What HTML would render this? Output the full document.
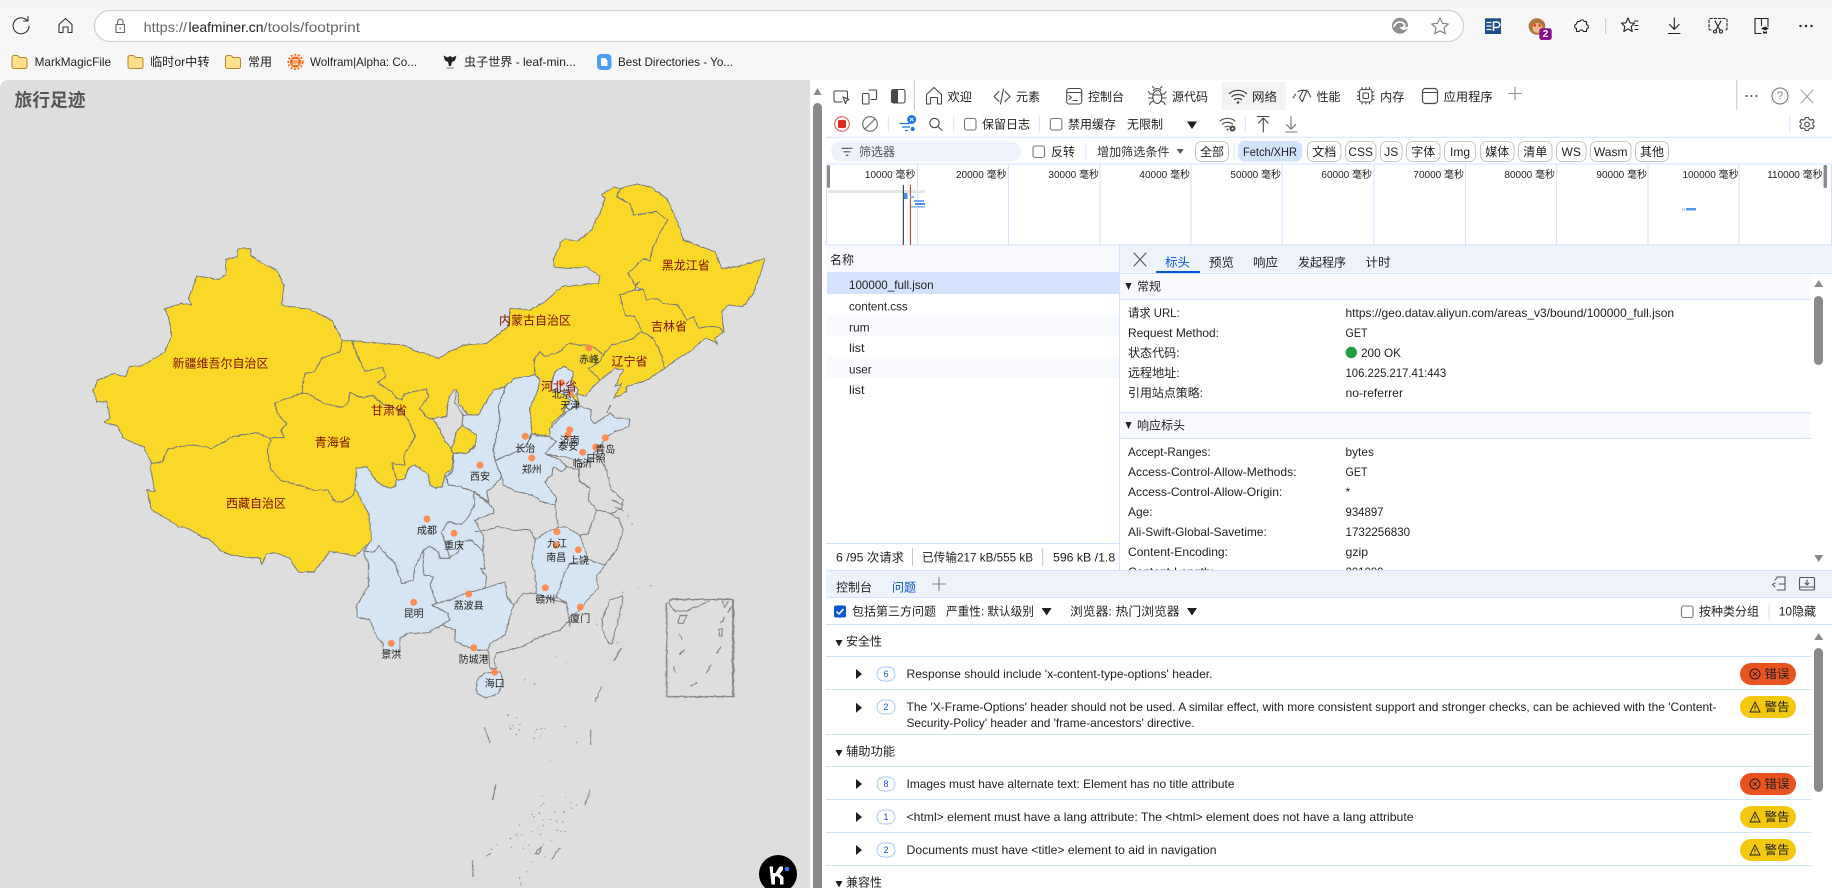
<!DOCTYPE html>
<html lang="zh-CN">
<head>
<meta charset="utf-8">
<title>旅行足迹</title>
<style>
html,body{margin:0;padding:0;width:1832px;height:888px;overflow:hidden;background:#fff}
svg{display:block;font-family:"Liberation Sans","Noto Sans CJK SC",sans-serif}
text{font-size:12px;fill:#1f1f1f;dominant-baseline:central}
.m polygon,.m path{stroke:#7c7c7c;stroke-width:1;vector-effect:non-scaling-stroke;stroke-linejoin:round}
.y{fill:#fad827}.b{fill:#d6e5f3}.g{fill:#dedede}.n{fill:none}
text.p{fill:#7d0f00;text-anchor:middle}
text.c{font-size:10px;fill:#222;text-anchor:middle}
text.tl{font-size:10px;text-anchor:end}
.d{fill:#ff8a4d;opacity:.95}
.i{fill:none;stroke:#474747;stroke-width:1.1;stroke-linecap:round;stroke-linejoin:round}
.l{stroke:#d3e3fd;stroke-width:1;fill:none}
.dv{stroke:#c7c7c7;stroke-width:1}
.btn{fill:#fff;stroke:#c4c7c5;stroke-width:1}
.f{fill:#1f1f1f}
.badge{fill:#fff;stroke:#a8c7fa;stroke-width:1}
text.bn{font-size:9px;fill:#0b57d0;text-anchor:middle}
</style>
</head>
<body>
<svg width="1832" height="888" viewBox="0 0 1832 888" xmlns="http://www.w3.org/2000/svg">
<defs>
<filter id="j" filterUnits="userSpaceOnUse" x="0" y="80" width="810" height="808" color-interpolation-filters="sRGB">
<feTurbulence type="fractalNoise" baseFrequency=".22" numOctaves="2" seed="4" result="n"/>
<feDisplacementMap in="SourceGraphic" in2="n" scale="2.4" xChannelSelector="R" yChannelSelector="G"/>
</filter>
<g id="fo"><path d="M.5 3.5a2 2 0 0 1 2-2h3.500l2 2h5.500a2 2 0 0 1 2 2v7a2 2 0 0 1-2 2h-11a2 2 0 0 1-2-2Z" fill="#ffe08a" stroke="#b3872a" stroke-width="1"/></g>
</defs>
<rect width="1832" height="888" fill="#fff"/>
<rect width="1832" height="80" fill="#f7f7f7"/>
<rect width="1832" height="8" fill="#f3f3f3"/>
<!-- browser bar -->
<path class="i" d="M27.500 21a8 8 0 1 0 1.600 5M28 16.500V21h-4.500" style="stroke:#333"/>
<path class="i" d="M59 32.500V24.500L65.500 18.500L72 24.500V32.500H68V27H63V32.500Z" style="stroke:#333"/>
<rect x="94.500" y="10.500" width="1369" height="31" rx="15.500" fill="#fff" stroke="#d2d2d2" stroke-width="1.300"/>
<path class="i" d="M116 24.500h8.500V32.500H116ZM117.500 24.500V22a2.800 2.800 0 0 1 5.600 0V24.500" style="stroke:#666"/><circle cx="120.200" cy="28.500" r=".8" fill="#666"/>
<text x="143.600" y="27" textLength="43.400" lengthAdjust="spacingAndGlyphs" style="font-size:14px;fill:#666">https://</text>
<text x="188.500" y="27" textLength="75" lengthAdjust="spacingAndGlyphs" style="font-size:14px;fill:#1f1f1f">leafminer.cn</text>
<text x="263.400" y="27" textLength="96.600" lengthAdjust="spacingAndGlyphs" style="font-size:14px;fill:#666">/tools/footprint</text>
<!-- bookmarks -->
<use href="#fo" x="11.500" y="54"/><text x="34.600" y="62" textLength="76.500" lengthAdjust="spacingAndGlyphs">MarkMagicFile</text>
<use href="#fo" x="127.500" y="54"/><text x="150" y="62" textLength="59.500" lengthAdjust="spacingAndGlyphs">临时or中转</text>
<use href="#fo" x="225" y="54"/><text x="248" y="62" textLength="24" lengthAdjust="spacingAndGlyphs">常用</text>
<circle cx="295.500" cy="62" r="5.500" fill="#f96a10"/><circle cx="295.500" cy="62" r="7.200" fill="none" stroke="#f96a10" stroke-width="1.800" stroke-dasharray="2 1.600"/><rect x="292.500" y="59" width="6" height="6" fill="#fff" opacity=".85"/><path d="M292.500 61h6M292.500 63h6" stroke="#f96a10"/>
<text x="310" y="62" textLength="107" lengthAdjust="spacingAndGlyphs">Wolfram|Alpha: Co...</text>
<path d="M443.500 55.500l4 2 2.500-1.500 2.500 1.500 4-2-1.500 5-3 1.500-1 4h-2l-1-4-3-1.500Z" fill="#222"/><rect x="446" y="67.500" width="8" height="1" fill="#888"/>
<text x="464" y="62" textLength="112" lengthAdjust="spacingAndGlyphs">虫子世界 - leaf-min...</text>
<rect x="597" y="54" width="14.500" height="16" rx="4" fill="#4a9ff5"/><path d="M601 58h4l2.500 2.500v5.500h-6.500Z" fill="#fff"/>
<text x="618" y="62" textLength="115" lengthAdjust="spacingAndGlyphs">Best Directories - Yo...</text>
<!-- right browser icons -->
<circle cx="1400" cy="25.700" r="8" fill="#8f8f8f"/><path d="M1394 27c1-5 6-6 9-4s1.500 5-1.500 5c2 2 5 .5 6-1" fill="none" stroke="#fff" stroke-width="1.800"/>
<path class="i" d="M1440 18l2.500 5.300 5.800.7-4.300 4 1.200 5.700-5.200-2.900-5.200 2.900 1.200-5.700-4.300-4 5.800-.7Z" style="stroke:#777"/>
<rect x="1485" y="18.300" width="16" height="15.700" fill="#1e4f8a"/>
<path d="M1486.500 22.500h5M1486.500 26h5M1486.500 29.500h5" stroke="#fff" stroke-width="1.300"/><path d="M1493.500 31v-9h3.500a2.500 2.500 0 0 1 0 5.500h-3.500" fill="none" stroke="#fff" stroke-width="1.500"/>
<circle cx="1531" cy="25" r="2.300" fill="#b3743b"/><circle cx="1543" cy="25" r="2.300" fill="#b3743b"/>
<circle cx="1537" cy="26.500" r="8.300" fill="#b3743b"/><circle cx="1537.500" cy="28" r="5" fill="#e8b98a"/><circle cx="1535" cy="25.500" r="1.200" fill="#e21"/><circle cx="1539.500" cy="25.500" r="1.200" fill="#e21"/>
<rect x="1539.300" y="28.300" width="12.400" height="11.700" rx="2.500" fill="#8a0d8a"/><text x="1545.500" y="34.300" style="font-size:10px;font-weight:bold;fill:#fff;text-anchor:middle">2</text>
<path class="i" d="M1577.500 21.500h2.300a2.300 2.300 0 0 1 4.400 0h2.300v3a2.300 2.300 0 0 1 0 4.500v2.500h-3a2.300 2.300 0 0 0-4.400 0h-2.600v-3a2.300 2.300 0 0 1 0-4.500Z" style="stroke:#222"/>
<line class="dv" x1="1605.700" y1="18" x2="1605.700" y2="34"/>
<path class="i" d="M1628 18l2 4.800 4.500.4-3.300 3.300 1 5-4.200-2.700-4.200 2.700 1-5-3.300-3.300 4.500-.4ZM1634.500 21h3.500M1635 25.500h3M1635 29.500h3" style="stroke:#222"/>
<path class="i" d="M1674.300 18v11M1669.500 24.500l4.800 4.800 4.800-4.800M1668.500 33.500h11.500" style="stroke:#222"/>
<path class="i" d="M1711 30h-.5a1.500 1.500 0 0 1-1.500-1.500V20a1.500 1.500 0 0 1 1.500-1.500h15a1.500 1.500 0 0 1 1.500 1.500v8.500a1.500 1.500 0 0 1-1.500 1.500h-.5" stroke-dasharray="2.500 1.800" style="stroke:#222"/><path class="i" d="M1715 21l5 9M1721 21l-5 9" style="stroke:#222"/><circle class="i" cx="1715" cy="31.500" r="1.500" style="stroke:#222"/><circle class="i" cx="1721" cy="31.500" r="1.500" style="stroke:#222"/>
<path class="i" d="M1755 18.500h13v8M1755 18.500v15h6M1761.500 18.500v7" style="stroke:#222"/><path d="M1761 28.500l4-2 4 2-4 2Z M1763 31v2.500h4V31l-2 1Z" fill="#222"/>
<g fill="#222"><circle cx="1800.500" cy="26" r="1.200"/><circle cx="1806" cy="26" r="1.200"/><circle cx="1811.500" cy="26" r="1.200"/></g>

<!-- page -->
<path d="M0 88a8 8 0 0 1 8-8H810V888H0Z" fill="#dedede"/>
<text x="14.500" y="100.700" textLength="71" lengthAdjust="spacingAndGlyphs" style="font-size:18px;font-weight:bold;fill:#555">旅行足迹</text>

<g filter="url(#j)">
<!-- MAP west -->
<g class="m" transform="translate(80 170) scale(.33333)">
<polygon class="y" points="475,235 510,235 515,258 545,280 590,300 612,345 605,405 690,418 755,450 788,512 780,545 725,565 703,605 675,610 665,670 585,698 592,730 620,760 603,780 613,803 565,803 530,788 460,800 395,835 340,825 265,835 245,878 215,880 190,830 130,805 115,770 72,757 90,745 80,695 50,695 40,660 55,630 105,610 135,620 150,590 190,585 255,545 275,495 265,440 252,417 305,400 335,405 325,385 352,318 415,328 437,315 437,268 472,260"/>
<polygon class="y" points="245,878 265,835 340,825 395,835 460,800 530,788 565,803 572,810 562,840 572,895 600,930 640,940 700,960 745,960 760,990 785,998 820,975 825,955 850,965 870,1030 878,1110 855,1130 825,1160 790,1150 750,1145 710,1195 705,1206 655,1206 650,1200 630,1165 590,1150 560,1150 545,1185 540,1165 485,1160 450,1155 420,1140 390,1110 355,1095 325,1075 295,1070 250,1040 215,1020 200,960 225,965 210,890 215,880"/>
<polygon class="y" points="788,512 815,512 838,570 855,605 910,592 916,620 892,638 935,665 950,685 965,688 975,670 1040,657 1045,680 1020,715 1045,745 1060,745 1085,790 1095,815 1115,835 1120,850 1115,900 1095,912 1088,950 1065,955 1050,945 1045,915 1005,885 985,895 975,925 950,930 935,880 975,885 970,860 1005,800 985,750 960,720 905,700 875,675 850,685 810,668 805,700 785,712 730,700 700,680 680,670 665,670 675,610 703,605 725,565 780,545"/>
<polygon class="y" points="665,670 680,670 700,680 730,700 785,712 805,700 810,668 850,685 875,675 905,700 960,720 985,750 1005,800 970,860 975,885 935,880 950,930 945,950 930,955 905,945 885,930 860,890 830,895 825,955 820,975 785,998 760,990 745,960 700,960 640,940 600,930 572,895 562,840 572,810 565,803 613,803 603,780 620,760 592,730 585,698"/>
<polygon class="y" points="1130,780 1145,760 1190,790 1190,820 1160,850 1120,850 1115,835"/>
</g>
<!-- MAP centre/north -->
<g class="m" transform="translate(430 170) scale(.33333)">
<polygon class="y" points="-235,512 -150,520 -80,525 -50,540 0,555 25,565 70,540 100,525 170,520 235,470 240,415 300,420 345,395 395,350 505,340 510,320 470,290 420,295 375,292 368,272 395,215 405,205 440,215 480,185 515,120 525,85 515,75 550,52 570,55 560,80 600,100 610,135 680,125 712,150 690,190 665,240 660,275 640,265 595,310 615,345 630,335 615,350 615,360 570,375 585,435 615,440 635,485 600,510 545,525 520,555 495,535 475,525 450,525 415,520 390,545 345,560 330,545 312,570 315,600 315,615 255,625 225,650 190,660 145,735 115,735 85,700 85,665 70,660 55,690 50,740 10,745 -5,745 -30,715 -5,680 -10,657 -75,670 -85,688 -100,685 -115,665 -158,638 -134,620 -140,592 -195,605 -212,570"/>
<polygon class="g" points="80,660 75,700 100,735 95,765 80,785 65,835 45,815 35,790 10,745 50,740 55,690 70,660"/>
<polygon class="y" points="570,55 620,42 660,50 710,85 740,150 760,210 855,245 875,295 925,290 1005,265 995,300 970,370 940,410 895,405 875,425 882,485 860,470 830,470 805,475 790,440 770,450 745,405 700,400 680,385 650,390 640,360 615,350 630,335 615,345 595,310 640,265 660,275 665,240 690,190 712,150 680,125 610,135 600,100 560,80"/>
<polygon class="y" points="615,360 640,360 650,390 680,385 700,400 745,405 770,450 790,440 805,475 830,470 860,470 882,485 855,505 862,525 845,510 825,505 780,545 745,565 705,595 690,545 670,505 635,485 615,440 585,435 570,375"/>
<polygon class="y" points="635,485 670,505 690,545 705,595 650,630 590,650 590,665 550,685 575,640 555,650 580,600 555,595 510,630 475,595 510,575 520,555 545,525 600,510"/>
<polygon class="y" points="330,545 345,560 390,545 415,520 450,525 475,525 495,535 520,555 510,575 475,595 510,630 490,650 465,680 440,670 450,720 400,730 365,760 360,800 305,790 300,710 320,670 330,630 315,615 312,570"/>
<polygon class="b" points="365,635 375,605 400,590 430,605 425,635 445,660 430,680 450,720 420,730 400,725 420,690 395,670 365,660"/>
<polygon class="b" points="225,650 255,625 315,615 330,630 320,670 300,710 305,790 290,825 240,855 195,870 190,840 210,750 205,710 220,670"/>
<polygon class="b" points="100,735 145,735 190,660 225,650 220,670 205,710 210,750 190,840 195,870 215,920 190,950 170,965 175,995 130,965 90,950 55,945 50,920 70,900 70,850 110,850 135,830 140,795 95,765"/>
<polygon class="b" points="195,870 240,855 290,825 305,795 360,800 380,815 345,850 390,870 410,890 395,905 370,890 365,915 345,935 380,985 375,1005 335,995 305,975 260,965 220,945 215,920"/>
<polygon class="b" points="360,800 360,775 405,730 440,705 485,720 480,745 495,760 540,730 560,745 600,748 595,770 555,785 530,800 510,830 490,850 505,860 460,880 435,870 405,860 385,860 345,850 380,815"/>
<path class="n" d="M540,705 L530,730 M410,890 L445,900 M460,880 L445,900 450,935 480,955 M505,860 L525,890"/>
</g>
<!-- MAP south -->
<g class="m" transform="translate(340 480) scale(.33333)">
<polygon class="b" points="50,-35 80,-40 105,0 125,15 150,25 165,20 170,0 195,-5 205,-35 225,-45 265,-15 270,15 285,25 308,20 315,-18 325,15 360,20 400,35 405,70 385,110 365,135 325,125 305,155 330,235 300,235 295,215 270,200 250,210 225,260 220,300 185,310 165,250 130,215 115,195 105,215 70,215 95,180 85,100 45,25"/>
<polygon class="b" points="365,135 385,110 405,70 400,35 445,70 460,85 460,100 405,120 430,170 430,215 410,195 395,180 370,185 355,215 330,235 305,155 325,125"/>
<polygon class="b" points="270,200 295,215 300,235 330,235 355,215 370,185 395,180 410,195 430,215 435,265 420,265 440,290 435,325 375,340 330,360 290,370 270,315 280,290 250,285 250,260 250,210"/>
<polygon class="b" points="70,215 105,215 115,195 130,215 165,250 185,310 220,300 225,260 250,210 250,285 280,290 270,315 290,370 275,375 325,400 328,420 305,435 260,460 205,460 180,475 180,515 130,510 130,490 110,470 90,420 50,410 50,375 85,320 85,250"/>
<polygon class="b" points="275,375 290,370 330,360 375,340 435,325 495,305 500,350 520,375 495,465 450,490 445,510 400,510 345,485 345,450 305,435 328,420 325,400"/>
<polygon class="b" points="585,180 620,155 650,145 675,140 720,165 735,210 745,240 690,250 670,290 650,350 640,360 590,340 585,280 575,250"/>
<polygon class="b" points="745,240 795,255 770,290 775,325 750,350 720,390 690,410 690,440 680,370 650,350 670,290 690,250"/>
<polygon class="b" points="430,580 480,575 490,600 475,640 440,655 410,640 410,605"/>
<path class="n" d="M405,155 440,150 475,140 520,150 570,150 585,180 M645,75 655,145 M730,-50 715,-30 720,5 750,25 745,60 770,90 745,160 720,165 M775,-70 795,-40 815,30 850,60 845,85 815,100 M770,90 810,100 835,115 850,150 830,210 795,255 M690,420 660,450 600,470 545,500 470,520 460,540 470,565 450,565 445,510 M520,375 550,340 590,340 M680,370 640,360 M815,60 850,75 M820,80 850,90"/>
<path class="n" d="M810,360 845,347 848,365 835,420 815,492 805,490 788,450 785,420Z"/>
<path class="n" d="M845,505 820,542 M785,620 765,665 M752,750 752,795 M750,928 735,975 M660,1103 635,1138 M397,1142 399,1190 M467,915 458,960 M433,742 450,788 M440,1128 452,1120"/>
<path class="n" d="M985,368 990,358 1180,358 1180,650 980,650 980,368 M1178,358 1178,650" style="stroke:#888;stroke-width:1.500"/>
<path class="n" d="M985,368 1005,395 1040,392 1110,362 M1145,362 1155,382 1165,362 M1020,408 1040,405 1032,430 1013,430Z M1018,460 1026,480 M1035,508 1018,525 M1000,560 1006,578 M1115,552 1097,580 M1072,607 1052,617 M1138,448 1146,448 1146,468 1138,468Z M1143,500 1130,520 M1155,412 1142,430 M1175,380 1162,398 M585,1120 605,1100 595,1122Z"/>
<path fill="none" style="stroke:#777;stroke-width:1.200;stroke-linecap:round" d="M505 705h.1M530 712h.1M508 738h.1M518 735h.1M540 733h.1M512 745h.1M522 745h.1M538 748h.1M528 765h.1M592 748h.1M603 745h.1M612 745h.1M585 758h.1M603 768h.1M582 775h.1M675 738h.1M710 788h.1M632 842h.1M608 950h.1M676 950h.1M612 970h.1M603 978h.1M693 968h.1M708 975h.1M695 985h.1M672 995h.1M645 995h.1M598 1000h.1M575 1003h.1M582 1010h.1M608 1020h.1M632 1018h.1M650 1025h.1M668 1025h.1M610 1035h.1M650 1050h.1M665 1055h.1M538 1035h.1M575 1055h.1M600 1062h.1M675 1055h.1M530 1065h.1M545 1065h.1M510 1075h.1M632 1082h.1M555 1085h.1M470 1095h.1M455 1108h.1M515 1100h.1M508 1115h.1M550 1105h.1M565 1095h.1M610 1095h.1M615 1130h.1M575 1145h.1M560 1175h.1M538 1195h.1M540 1210h.1M545 1215h.1M850 335h.1M895 325h.1M932 318h.1M768 425h.1M770 435h.1M650 532h.1M678 547h.1M555 600h.1M582 612h.1M832 488h.1M865 110h.1M875 130h.1"/>
</g>
</g>
<!-- dots -->
<g class="d">
<circle cx="427" cy="519" r="3.500"/><circle cx="454" cy="533.300" r="3.500"/><circle cx="480" cy="465" r="3.500"/><circle cx="589" cy="348" r="3.500"/><circle cx="561.700" cy="382.700" r="3.500"/><circle cx="570.300" cy="394" r="3.500"/><circle cx="525.300" cy="436.300" r="3.500"/><circle cx="531.700" cy="458" r="3.500"/><circle cx="569.700" cy="429.700" r="3.500"/><circle cx="568" cy="435" r="3.500"/><circle cx="605.300" cy="437.700" r="3.500"/><circle cx="595.700" cy="447" r="3.500"/><circle cx="582.700" cy="452.300" r="3.500"/><circle cx="557" cy="531.700" r="3.500"/><circle cx="556.300" cy="545" r="3.500"/><circle cx="578.300" cy="549.700" r="3.500"/><circle cx="545.300" cy="587.700" r="3.500"/><circle cx="580.300" cy="607" r="3.500"/><circle cx="468.700" cy="594" r="3.500"/><circle cx="413.700" cy="602.300" r="3.500"/><circle cx="391.300" cy="643.300" r="3.500"/><circle cx="473.700" cy="647.700" r="3.500"/><circle cx="494.700" cy="672.300" r="3.500"/>
</g>
<!-- province labels -->
<text class="p" x="220.500" y="363.300">新疆维吾尔自治区</text>
<text class="p" x="389" y="410.700">甘肃省</text>
<text class="p" x="332.800" y="442.700">青海省</text>
<text class="p" x="256" y="503.300">西藏自治区</text>
<text class="p" x="685.700" y="265.700">黑龙江省</text>
<text class="p" x="669" y="326.700">吉林省</text>
<text class="p" x="629.500" y="361.700">辽宁省</text>
<text class="p" x="535" y="320.700">内蒙古自治区</text>
<text class="p" x="559" y="386.700">河北省</text>
<!-- city labels -->
<text class="c" x="427" y="531.700">成都</text><text class="c" x="454" y="546.700">重庆</text><text class="c" x="480" y="477.300">西安</text><text class="c" x="589" y="360.300">赤峰</text><text class="c" x="561.700" y="395.700">北京</text><text class="c" x="570.300" y="406.700">天津</text><text class="c" x="525.300" y="449.300">长治</text><text class="c" x="531.700" y="470.300">郑州</text><text class="c" x="569.700" y="441.700">济南</text><text class="c" x="568" y="447.300">泰安</text><text class="c" x="605.300" y="450.300">青岛</text><text class="c" x="595.700" y="459.300">日照</text><text class="c" x="582.700" y="464.700">临沂</text><text class="c" x="557" y="544.300">九江</text><text class="c" x="556.300" y="558.300">南昌</text><text class="c" x="579" y="561.700">上饶</text><text class="c" x="545.300" y="600.700">赣州</text><text class="c" x="580.300" y="619.300">厦门</text><text class="c" x="468.700" y="606.300">荔波县</text><text class="c" x="413.700" y="614.300">昆明</text><text class="c" x="391.300" y="655.300">景洪</text><text class="c" x="473.700" y="660.300">防城港</text><text class="c" x="494.700" y="684.700">海口</text>
<!-- K logo -->
<circle cx="778" cy="874" r="19" fill="#000"/>
<path d="M769.500 866.500h3.500v6.500h2.500l4-6.500h3.500v3l-3.300 4.500 3.800 3.200v7.300h-3.500v-5.800l-2.500-2.300h-2.500v8.100h-3.500Z" fill="#fff"/>
<circle cx="787" cy="869" r="2.300" fill="#3a6ff7"/>

<!-- devtools scrollbar -->
<rect x="810" y="80" width="1022" height="808" fill="#fff"/>
<path d="M817.500 88l4 7h-8Z" fill="#8a8a8a"/>
<rect x="813" y="103" width="9" height="800" rx="4.500" fill="#8a8a8a"/>

<!-- devtools tab row -->
<path class="i" d="M847.500 99V92.500a1.500 1.500 0 0 0-1.500-1.500h-10.500a1.500 1.500 0 0 0-1.500 1.500v8a1.500 1.500 0 0 0 1.500 1.500H842"/><path class="i" d="M843 97l6 2.500-2.500 1.200-1 3Z"/>
<path class="i" d="M862.500 94.500a1 1 0 0 1 1-1h4.500a1 1 0 0 1 1 1v8.500a1 1 0 0 1-1 1h-4.500a1 1 0 0 1-1-1ZM869 90h6.500a1 1 0 0 1 1 1v7.500a1 1 0 0 1-1 1H871"/>
<rect x="891.500" y="89.500" width="13.500" height="13.500" rx="2" class="i"/><path d="M893.500 89.500h4.500v13.500h-4.500a2 2 0 0 1-2-2v-9.500a2 2 0 0 1 2-2Z" fill="#474747"/>
<line class="dv" x1="914.300" y1="80" x2="914.300" y2="110"/>
<path class="i" d="M926.500 104V94.500L934 87.500L941.500 94.500V104H937.500V97.500H930.500V104Z"/>
<text x="947.500" y="97" textLength="24.500" lengthAdjust="spacingAndGlyphs">欢迎</text>
<path class="i" d="M999 91.500l-5 5 5 5M1005 91.500l5 5-5 5M1003.500 89l-3 15"/>
<text x="1016" y="97" textLength="24" lengthAdjust="spacingAndGlyphs">元素</text>
<rect class="i" x="1066.700" y="88.500" width="15" height="15.500" rx="2.500"/><path class="i" d="M1067 92.500h14.500M1069 95.500l2.500 2-2.500 2M1073 100.500h4.500"/>
<text x="1088" y="97" textLength="36" lengthAdjust="spacingAndGlyphs">控制台</text>
<ellipse class="i" cx="1157.300" cy="97" rx="4.500" ry="6.500"/><path class="i" d="M1153.500 90.500c1-2.500 6.500-2.500 7.500 0M1153 94h-3l-1.500-2.500M1153 98h-4.500M1153.500 101l-3 1.500-1 2M1161.500 94h3l1.500-2.500M1161.500 98h4.500M1161 101l3 1.500 1 2M1154 88l-1.500-1.500M1160.500 88l1.500-1.500M1153 95h8.500"/>
<text x="1172" y="97" textLength="36" lengthAdjust="spacingAndGlyphs">源代码</text>
<rect x="1222" y="82" width="64" height="28" fill="#f1f3f4"/>
<path class="i" d="M1229.500 93.500c4.500-4.200 12.500-4.200 17 0M1232 96.500c3-2.700 9-2.700 12 0M1234.500 99.500c1.500-1.300 5.500-1.300 7 0" style="stroke-width:1.300"/><circle cx="1238" cy="102.500" r="1.300" fill="#474747"/>
<text x="1252" y="97" textLength="25" lengthAdjust="spacingAndGlyphs">网络</text>
<path class="i" d="M1293.200 98l2.300-3.800M1298 91.500c3-1.800 7.500-1.800 10 .2l2.700 5.300M1307 90l-4.500 11.500M1303 91l-3.500 6.500 2.500 4"/>
<text x="1316.500" y="97" textLength="24" lengthAdjust="spacingAndGlyphs">性能</text>
<rect class="i" x="1359.500" y="89.500" width="12.500" height="12.500" rx="2.500"/><rect class="i" x="1363" y="93" width="5.500" height="5.500" rx="1"/><path class="i" d="M1362 87.500v2M1365.800 87.500v2M1369.500 87.500v2M1362 102v2M1365.800 102v2M1369.500 102v2M1357.500 92h2M1357.500 95.800h2M1357.500 99.500h2M1372 92h2M1372 95.800h2M1372 99.500h2"/>
<text x="1380" y="97" textLength="24.500" lengthAdjust="spacingAndGlyphs">内存</text>
<rect class="i" x="1422.500" y="88.500" width="15" height="15" rx="3" style="stroke-width:1.200"/><path class="i" d="M1423 92.500h14"/>
<text x="1443.600" y="97" textLength="49" lengthAdjust="spacingAndGlyphs">应用程序</text>
<path class="i" d="M1515 87v13M1508.500 93.500h13" style="stroke:#909090"/>
<line class="dv" x1="1736.700" y1="80" x2="1736.700" y2="110"/>
<g fill="#474747"><circle cx="1746.500" cy="96" r="1"/><circle cx="1751.500" cy="96" r="1"/><circle cx="1756.500" cy="96" r="1"/></g>
<circle class="i" cx="1780" cy="96" r="8" style="stroke:#777"/><text x="1780" y="96" style="font-size:11px;fill:#777;text-anchor:middle">?</text>
<path class="i" d="M1801 90l12 13M1813 90l-12 13" style="stroke:#8a8a8a;stroke-width:.9"/>

<!-- row 2 -->
<circle cx="842" cy="124" r="7.300" fill="none" stroke="#e05a50" stroke-width="1.100"/><rect x="838" y="120" width="8" height="8" rx="1.500" fill="#d92d20"/>
<circle class="i" cx="870" cy="124" r="7.300" style="stroke:#666"/><path class="i" d="M865 129l10-10" style="stroke:#666"/>
<line class="l" x1="888.300" y1="116" x2="888.300" y2="132"/>
<path d="M899.500 123.500h10M902 127h8M905 130.500h3" stroke="#1a73e8" stroke-width="1.200" fill="none"/><circle cx="911.700" cy="119.500" r="4.500" fill="#1a73e8"/><path d="M910 118l3.400 3M913.400 118l-3.400 3" stroke="#fff"/><circle cx="912.700" cy="129" r="2" fill="#1a73e8"/>
<circle class="i" cx="934.500" cy="123" r="4.700"/><path class="i" d="M938 126.500l4 4"/>
<line class="l" x1="953.700" y1="116" x2="953.700" y2="132"/>
<rect class="i" x="964.500" y="118.500" width="11.500" height="11.500" rx="2" style="stroke:#777"/>
<text x="982" y="124.700" textLength="48" lengthAdjust="spacingAndGlyphs">保留日志</text>
<line class="l" x1="1039.300" y1="116" x2="1039.300" y2="132"/>
<rect class="i" x="1050.300" y="118.500" width="11.500" height="11.500" rx="2" style="stroke:#777"/>
<text x="1068" y="124.700" textLength="48" lengthAdjust="spacingAndGlyphs">禁用缓存</text>
<text x="1127" y="124.700" textLength="36" lengthAdjust="spacingAndGlyphs">无限制</text>
<path d="M1187 121.500h10l-5 7.500Z" fill="#1f1f1f"/>
<path class="i" d="M1220 121c4-3.500 11-3.500 15 0M1222.500 124c2.500-2.300 7.500-2.300 10 0M1225 127c1.200-1 3.800-1 5 0"/><circle cx="1227.500" cy="129.500" r="1" fill="#474747"/><circle cx="1232.500" cy="128.500" r="3" fill="#474747"/><circle cx="1232.500" cy="128.500" r="1" fill="#fff"/>
<line class="l" x1="1245.300" y1="116" x2="1245.300" y2="132"/>
<path class="i" d="M1263.300 118v14M1258.500 123l4.800-5 4.800 5M1257.500 116.500h11.500"/>
<path class="i" d="M1291 116.500v12.500M1286.300 124.500l4.700 4.700 4.700-4.700M1285.500 132h11.500" style="stroke:#777"/>
<line class="l" x1="1790" y1="116" x2="1790" y2="132"/>
<circle class="i" cx="1807" cy="124.500" r="2.300"/><path class="i" d="M1805.500 117.500h3l.6 1.800 1.900.8 1.700-.8 1.500 2.600-1.400 1.100v2l1.400 1.100-1.500 2.600-1.700-.8-1.900.8-.6 1.800h-3l-.6-1.800-1.900-.8-1.700.8-1.500-2.600 1.400-1.100v-2l-1.400-1.100 1.500-2.600 1.700.8 1.900-.8Z"/>
<line class="l" x1="826" y1="137.300" x2="1832" y2="137.300"/>

<!-- row 3 -->
<rect x="831" y="141" width="190" height="20.500" rx="10.200" fill="#edf2fb"/>
<path class="i" d="M842 148.300h10M844 151.800h6M846 155.300h2" style="stroke:#555"/>
<text x="859" y="152" textLength="36" lengthAdjust="spacingAndGlyphs" style="fill:#555">筛选器</text>
<rect class="i" x="1033" y="146" width="11.500" height="11.500" rx="2" style="stroke:#777"/>
<text x="1051" y="152" textLength="24" lengthAdjust="spacingAndGlyphs">反转</text>
<line class="l" x1="1086" y1="143" x2="1086" y2="160"/>
<text x="1097" y="152" textLength="72.500" lengthAdjust="spacingAndGlyphs" style="fill:#333">增加筛选条件</text>
<path d="M1176.700 149h7l-3.500 5Z" fill="#555"/>
<rect class="btn" x="1195.500" y="141.500" width="33" height="20" rx="6"/><text x="1212" y="152" style="text-anchor:middle">全部</text>
<line class="l" x1="1234" y1="143" x2="1234" y2="160"/>
<rect x="1238" y="141" width="64" height="20.500" rx="6" fill="#d3e3fd"/><text x="1270" y="152" textLength="54" lengthAdjust="spacingAndGlyphs" style="text-anchor:middle">Fetch/XHR</text>
<rect class="btn" x="1307.500" y="141.500" width="33.500" height="20" rx="6"/><text x="1324.200" y="152" style="text-anchor:middle">文档</text>
<rect class="btn" x="1345.500" y="141.500" width="30.500" height="20" rx="6"/><text x="1360.700" y="152" style="text-anchor:middle">CSS</text>
<rect class="btn" x="1380.500" y="141.500" width="21.500" height="20" rx="6"/><text x="1391.200" y="152" style="text-anchor:middle">JS</text>
<rect class="btn" x="1406.500" y="141.500" width="33.500" height="20" rx="6"/><text x="1423.200" y="152" style="text-anchor:middle">字体</text>
<rect class="btn" x="1444.500" y="141.500" width="31" height="20" rx="6"/><text x="1460" y="152" style="text-anchor:middle">Img</text>
<rect class="btn" x="1480.500" y="141.500" width="33.500" height="20" rx="6"/><text x="1497.200" y="152" style="text-anchor:middle">媒体</text>
<rect class="btn" x="1518.500" y="141.500" width="33.500" height="20" rx="6"/><text x="1535.200" y="152" style="text-anchor:middle">清单</text>
<rect class="btn" x="1556.500" y="141.500" width="29.500" height="20" rx="6"/><text x="1571.200" y="152" style="text-anchor:middle">WS</text>
<rect class="btn" x="1590.500" y="141.500" width="40.500" height="20" rx="6"/><text x="1610.700" y="152" style="text-anchor:middle">Wasm</text>
<rect class="btn" x="1635.500" y="141.500" width="33" height="20" rx="6"/><text x="1652" y="152" style="text-anchor:middle">其他</text>

<!-- timeline -->
<rect x="826.500" y="164" width="1005" height="81" fill="#fff" stroke="#d3e3fd" stroke-width="1"/>
<g class="l" style="stroke:#d3e3fd"><path d="M917.500 164V245M1008.500 164V245M1100 164V245M1191 164V245M1282 164V245M1374 164V245M1465.500 164V245M1556.600 164V245M1648 164V245M1739 164V245"/></g>
<g>
<text class="tl" x="915.500" y="175.700">10000  毫秒</text><text class="tl" x="1006.600" y="175.700">20000  毫秒</text><text class="tl" x="1099" y="175.700">30000  毫秒</text><text class="tl" x="1190" y="175.700">40000  毫秒</text><text class="tl" x="1281" y="175.700">50000  毫秒</text><text class="tl" x="1372" y="175.700">60000  毫秒</text><text class="tl" x="1464" y="175.700">70000  毫秒</text><text class="tl" x="1555" y="175.700">80000  毫秒</text><text class="tl" x="1647" y="175.700">90000  毫秒</text><text class="tl" x="1738.600" y="175.700">100000  毫秒</text><text class="tl" x="1822.600" y="175.700">110000  毫秒</text>
</g>
<rect x="827" y="165" width="3" height="23" rx="1.500" fill="#8a8a8a"/>
<rect x="1823.500" y="165" width="3.500" height="23" rx="1.500" fill="#8a8a8a"/>
<rect x="828" y="190" width="97" height="3" fill="#e6e6e6"/>
<line x1="903.300" y1="185" x2="903.300" y2="245" stroke="#222"/>
<line x1="910.400" y1="185" x2="910.400" y2="245" stroke="#d93025"/>
<rect x="904" y="193" width="3.500" height="6" fill="#4a8cf0"/><rect x="910" y="196" width="4" height="2" fill="#8ab4f8"/>
<rect x="914" y="200" width="10" height="2" fill="#7aa7f0"/><rect x="915" y="203" width="10" height="2" fill="#4a8cf0"/><rect x="911" y="206" width="14" height="1.600" fill="#8ab4f8"/>
<rect x="1682" y="208.500" width="3" height="2" fill="#a8c7fa"/><rect x="1686" y="208" width="10" height="2.500" fill="#5a96f0"/>

<!-- name panel -->
<rect x="826" y="245.500" width="294" height="26.500" fill="#f8fafd"/>
<text x="830" y="260" textLength="24" lengthAdjust="spacingAndGlyphs">名称</text>
<rect x="827" y="272" width="292.500" height="22" fill="#d3e3fd"/>
<rect x="827" y="315" width="292.500" height="21" fill="#f8fafd"/>
<rect x="827" y="357" width="292.500" height="21" fill="#f8fafd"/>
<text x="849" y="285" textLength="84.600" lengthAdjust="spacingAndGlyphs">100000_full.json</text>
<text x="849" y="306.300" textLength="58.700" lengthAdjust="spacingAndGlyphs">content.css</text>
<text x="849" y="327.300" textLength="20.700" lengthAdjust="spacingAndGlyphs">rum</text>
<text x="849" y="348" textLength="15.500" lengthAdjust="spacingAndGlyphs">list</text>
<text x="849" y="369.300" textLength="22.600" lengthAdjust="spacingAndGlyphs">user</text>
<text x="849" y="390" textLength="15.500" lengthAdjust="spacingAndGlyphs">list</text>
<line class="l" x1="826" y1="543.500" x2="1120" y2="543.500"/>
<text x="836" y="557.700" textLength="68" lengthAdjust="spacingAndGlyphs">6 /95 次请求</text>
<line class="dv" x1="912.500" y1="548" x2="912.500" y2="566"/>
<text x="922" y="557.700" textLength="111" lengthAdjust="spacingAndGlyphs">已传输217 kB/555 kB</text>
<line class="dv" x1="1042.700" y1="548" x2="1042.700" y2="566"/>
<text x="1053" y="557.700" textLength="84" lengthAdjust="spacingAndGlyphs">596 kB /1.8 MB</text>
<rect x="1119" y="543" width="22" height="27" fill="#fff"/>
<line class="l" x1="1119.500" y1="245" x2="1119.500" y2="570"/>

<!-- detail panel -->
<rect x="1120" y="245.500" width="712" height="27" fill="#edf2fb"/>
<path class="i" d="M1134 253l12 13M1146 253l-12 13" style="stroke:#555"/>
<text x="1165" y="262.700" textLength="25" lengthAdjust="spacingAndGlyphs" style="fill:#0b57d0">标头</text>
<rect x="1156" y="271" width="44" height="2" fill="#0b57d0"/>
<text x="1209" y="262.700" textLength="25" lengthAdjust="spacingAndGlyphs">预览</text>
<text x="1253" y="262.700" textLength="25" lengthAdjust="spacingAndGlyphs">响应</text>
<text x="1298" y="262.700" textLength="48" lengthAdjust="spacingAndGlyphs">发起程序</text>
<text x="1365.500" y="262.700" textLength="25" lengthAdjust="spacingAndGlyphs">计时</text>
<line class="l" x1="1120" y1="273.500" x2="1832" y2="273.500"/>
<rect x="1120" y="274" width="691" height="25" fill="#f8fafd"/>
<rect x="1120" y="413" width="691" height="25" fill="#f8fafd"/>
<line class="l" x1="1120" y1="299.500" x2="1811" y2="299.500"/>
<line class="l" x1="1120" y1="412.500" x2="1811" y2="412.500"/>
<line class="l" x1="1120" y1="438.500" x2="1811" y2="438.500"/>
<path class="f" d="M1125.500 283h6l-3 7ZM1125.500 422h6l-3 7Z"/>
<text x="1137" y="286.700" textLength="24" lengthAdjust="spacingAndGlyphs">常规</text>
<text x="1137" y="425.700" textLength="48" lengthAdjust="spacingAndGlyphs">响应标头</text>
<text x="1128" y="313" textLength="51.600" lengthAdjust="spacingAndGlyphs">请求 URL:</text>
<text x="1345.500" y="313" textLength="328.600" lengthAdjust="spacingAndGlyphs">https://geo.datav.aliyun.com/areas_v3/bound/100000_full.json</text>
<text x="1128" y="333" textLength="91" lengthAdjust="spacingAndGlyphs">Request Method:</text><text x="1345.500" y="333" textLength="22" lengthAdjust="spacingAndGlyphs">GET</text>
<text x="1128" y="353" textLength="51.600" lengthAdjust="spacingAndGlyphs">状态代码:</text><circle cx="1351.300" cy="352.500" r="5.700" fill="#1e9e3e"/><text x="1361" y="353" textLength="40" lengthAdjust="spacingAndGlyphs">200 OK</text>
<text x="1128" y="373" textLength="51.600" lengthAdjust="spacingAndGlyphs">远程地址:</text><text x="1345.500" y="373" textLength="100.700" lengthAdjust="spacingAndGlyphs">106.225.217.41:443</text>
<text x="1128" y="393" textLength="75" lengthAdjust="spacingAndGlyphs">引用站点策略:</text><text x="1345.500" y="393" textLength="57.500" lengthAdjust="spacingAndGlyphs">no-referrer</text>
<text x="1128" y="452" textLength="82.600" lengthAdjust="spacingAndGlyphs">Accept-Ranges:</text><text x="1345.500" y="452" textLength="28.400" lengthAdjust="spacingAndGlyphs">bytes</text>
<text x="1128" y="472" textLength="168.500" lengthAdjust="spacingAndGlyphs">Access-Control-Allow-Methods:</text><text x="1345.500" y="472" textLength="22" lengthAdjust="spacingAndGlyphs">GET</text>
<text x="1128" y="492" textLength="154.300" lengthAdjust="spacingAndGlyphs">Access-Control-Allow-Origin:</text><text x="1345.500" y="492">*</text>
<text x="1128" y="512" textLength="24.500" lengthAdjust="spacingAndGlyphs">Age:</text><text x="1345.500" y="512" textLength="38" lengthAdjust="spacingAndGlyphs">934897</text>
<text x="1128" y="532" textLength="138.800" lengthAdjust="spacingAndGlyphs">Ali-Swift-Global-Savetime:</text><text x="1345.500" y="532" textLength="64.600" lengthAdjust="spacingAndGlyphs">1732256830</text>
<text x="1128" y="552" textLength="100" lengthAdjust="spacingAndGlyphs">Content-Encoding:</text><text x="1345.500" y="552" textLength="22.600" lengthAdjust="spacingAndGlyphs">gzip</text>
<text x="1128" y="572" textLength="86" lengthAdjust="spacingAndGlyphs">Content-Length:</text><text x="1345.500" y="572" textLength="38" lengthAdjust="spacingAndGlyphs">201080</text>
<path d="M1818.700 280l4.500 7h-9Z" fill="#8a8a8a"/>
<rect x="1814" y="296" width="9" height="69" rx="4.500" fill="#8a8a8a"/>
<path d="M1818.700 562l4.500-7h-9Z" fill="#8a8a8a"/>

<!-- drawer -->
<rect x="826" y="570" width="1006" height="27.500" fill="#edf2fb"/>
<line class="l" x1="826" y1="570.500" x2="1832" y2="570.500"/>
<line class="l" x1="826" y1="597.500" x2="1832" y2="597.500"/>
<text x="836" y="587.700" textLength="36" lengthAdjust="spacingAndGlyphs">控制台</text>
<text x="892" y="587.700" textLength="24" lengthAdjust="spacingAndGlyphs" style="fill:#0b57d0">问题</text>
<path class="i" d="M939 577.500v13M932.500 584h13" style="stroke:#808080"/>
<path class="i" d="M1777 577h8v13h-8M1775 583l-2.500 1.500 2.500 2.500M1779 584h6M1775 580l2-2" style="stroke:#555"/>
<rect class="i" x="1799.500" y="577.500" width="15" height="12.500" rx="1.500" style="stroke:#555"/><path class="i" d="M1807 580v5l-2-2M1807 585l2-2M1800 587h14" style="stroke:#555"/>
<rect x="834" y="605.500" width="12" height="12" rx="2" fill="#0b57d0"/><path d="M836.500 611.500l2.500 2.500 4.500-5" stroke="#fff" stroke-width="1.500" fill="none"/>
<text x="852" y="611.700" textLength="84" lengthAdjust="spacingAndGlyphs">包括第三方问题</text>
<text x="946" y="611.700" textLength="88" lengthAdjust="spacingAndGlyphs">严重性: 默认级别</text>
<path class="f" d="M1041.600 608h10l-5 7.500Z"/>
<text x="1070" y="611.700" textLength="109.600" lengthAdjust="spacingAndGlyphs">浏览器:  热门浏览器</text>
<path class="f" d="M1187 608h10l-5 7.500Z"/>
<rect class="i" x="1681.500" y="606" width="11.500" height="11.500" rx="2" style="stroke:#777"/>
<text x="1699" y="611.700" textLength="60" lengthAdjust="spacingAndGlyphs">按种类分组</text>
<line class="l" x1="1769" y1="604" x2="1769" y2="620"/>
<text x="1778.700" y="611.700" textLength="37.300" lengthAdjust="spacingAndGlyphs">10隐藏</text>
<line class="l" x1="826" y1="624.500" x2="1832" y2="624.500"/>

<path class="f" d="M835.500 640h7l-3.500 6.500Z"/><text x="846" y="641.700" textLength="36" lengthAdjust="spacingAndGlyphs">安全性</text>
<line class="l" x1="826" y1="656.500" x2="1811" y2="656.500"/>
<path class="f" d="M856 669l6 5-6 5Z"/><rect class="badge" x="877" y="667" width="18" height="14" rx="7"/><text class="bn" x="886" y="674">6</text>
<text x="906.500" y="674" textLength="306" lengthAdjust="spacingAndGlyphs">Response should include 'x-content-type-options' header.</text>
<rect x="1740" y="663" width="56" height="22" rx="11" fill="#e9531f"/><circle cx="1755" cy="674" r="5" fill="none" stroke="#1f1f1f"/><path d="M1753 672l4 4M1757 672l-4 4" stroke="#1f1f1f" stroke-width=".8"/><text x="1764.500" y="674" textLength="25" lengthAdjust="spacingAndGlyphs">错误</text>
<line class="l" x1="826" y1="689.500" x2="1811" y2="689.500"/>
<path class="f" d="M856 702.700l6 5-6 5Z"/><rect class="badge" x="877" y="700" width="18" height="14" rx="7"/><text class="bn" x="886" y="707">2</text>
<text x="906.500" y="707" textLength="810" lengthAdjust="spacingAndGlyphs">The 'X-Frame-Options' header should not be used. A similar effect, with more consistent support and stronger checks, can be achieved with the 'Content-</text>
<text x="906.500" y="723" textLength="288" lengthAdjust="spacingAndGlyphs">Security-Policy' header and 'frame-ancestors' directive.</text>
<rect x="1740" y="696" width="56" height="22" rx="11" fill="#f3c80f"/><path d="M1755 702l5 10h-10ZM1755 705.500v3.500M1755 710v.8" fill="none" stroke="#1f1f1f" stroke-width=".9"/><text x="1764.500" y="707" textLength="25" lengthAdjust="spacingAndGlyphs">警告</text>
<line class="l" x1="826" y1="734.500" x2="1811" y2="734.500"/>

<path class="f" d="M835.500 750h7l-3.500 6.500Z"/><text x="846" y="751.700" textLength="49" lengthAdjust="spacingAndGlyphs">辅助功能</text>
<line class="l" x1="826" y1="766.500" x2="1811" y2="766.500"/>
<path class="f" d="M856 779l6 5-6 5Z"/><rect class="badge" x="877" y="777" width="18" height="14" rx="7"/><text class="bn" x="886" y="784">8</text>
<text x="906.500" y="784" textLength="328" lengthAdjust="spacingAndGlyphs">Images must have alternate text: Element has no title attribute</text>
<rect x="1740" y="773" width="56" height="22" rx="11" fill="#e9531f"/><circle cx="1755" cy="784" r="5" fill="none" stroke="#1f1f1f"/><path d="M1753 782l4 4M1757 782l-4 4" stroke="#1f1f1f" stroke-width=".8"/><text x="1764.500" y="784" textLength="25" lengthAdjust="spacingAndGlyphs">错误</text>
<line class="l" x1="826" y1="799.500" x2="1811" y2="799.500"/>
<path class="f" d="M856 812l6 5-6 5Z"/><rect class="badge" x="877" y="810" width="18" height="14" rx="7"/><text class="bn" x="886" y="817">1</text>
<text x="906.500" y="817" textLength="507" lengthAdjust="spacingAndGlyphs">&lt;html&gt; element must have a lang attribute: The &lt;html&gt; element does not have a lang attribute</text>
<rect x="1740" y="806" width="56" height="22" rx="11" fill="#f3c80f"/><path d="M1755 812l5 10h-10ZM1755 815.500v3.500M1755 820v.8" fill="none" stroke="#1f1f1f" stroke-width=".9"/><text x="1764.500" y="817" textLength="25" lengthAdjust="spacingAndGlyphs">警告</text>
<line class="l" x1="826" y1="832.500" x2="1811" y2="832.500"/>
<path class="f" d="M856 845l6 5-6 5Z"/><rect class="badge" x="877" y="843" width="18" height="14" rx="7"/><text class="bn" x="886" y="850">2</text>
<text x="906.500" y="850" textLength="310" lengthAdjust="spacingAndGlyphs">Documents must have &lt;title&gt; element to aid in navigation</text>
<rect x="1740" y="839" width="56" height="22" rx="11" fill="#f3c80f"/><path d="M1755 845l5 10h-10ZM1755 848.500v3.500M1755 853v.8" fill="none" stroke="#1f1f1f" stroke-width=".9"/><text x="1764.500" y="850" textLength="25" lengthAdjust="spacingAndGlyphs">警告</text>
<line class="l" x1="826" y1="865.500" x2="1811" y2="865.500"/>
<path class="f" d="M835.500 881h7l-3.500 6.500Z"/><text x="846" y="882.700" textLength="36" lengthAdjust="spacingAndGlyphs">兼容性</text>
<path d="M1818.700 633l4.500 7h-9Z" fill="#8a8a8a"/>
<rect x="1814" y="648" width="9" height="144" rx="4.500" fill="#8a8a8a"/>
</svg>
</body>
</html>
